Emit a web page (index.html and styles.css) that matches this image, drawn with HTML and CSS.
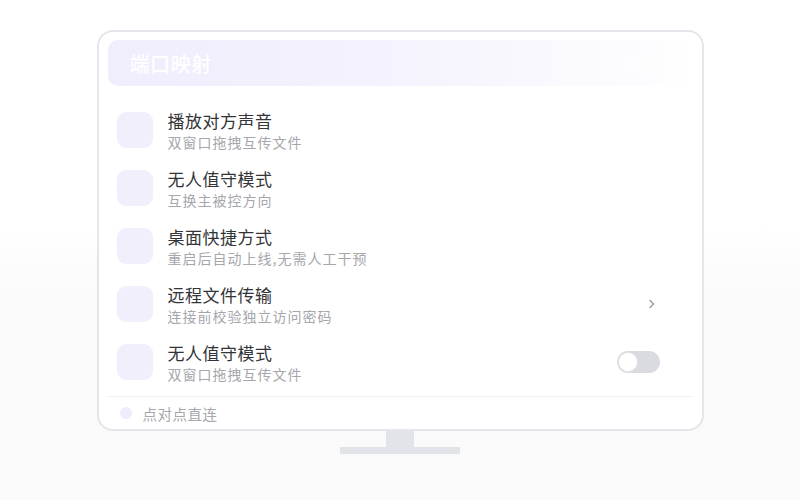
FILE: index.html
```html
<!DOCTYPE html>
<html lang="zh-CN">
<head>
  <meta charset="UTF-8">
  <title>端口映射</title>
  <link rel="stylesheet" href="styles.css">
</head>
<body>
  <div class="stage">
    <div class="monitor">
      <div class="header">
        <span class="header-title">端口映射</span>
        <span class="header-extra">设置</span>
      </div>
      <div class="list">
        <div class="row">
          <div class="icon"></div>
          <div class="text">
            <div class="title">播放对方声音</div>
            <div class="sub">双窗口拖拽互传文件</div>
          </div>
        </div>
        <div class="row">
          <div class="icon"></div>
          <div class="text">
            <div class="title">无人值守模式</div>
            <div class="sub">互换主被控方向</div>
          </div>
        </div>
        <div class="row">
          <div class="icon"></div>
          <div class="text">
            <div class="title">桌面快捷方式</div>
            <div class="sub">重启后自动上线,无需人工干预</div>
          </div>
        </div>
        <div class="row">
          <div class="icon"></div>
          <div class="text">
            <div class="title">远程文件传输</div>
            <div class="sub">连接前校验独立访问密码</div>
          </div>
          <svg class="chevron" width="8" height="12" viewBox="0 0 8 12">
            <path d="M2 2.5 L5.5 6 L2 9.5" fill="none" stroke="#9a9ca3" stroke-width="1.4" stroke-linecap="round" stroke-linejoin="round"/>
          </svg>
        </div>
        <div class="row">
          <div class="icon"></div>
          <div class="text">
            <div class="title">无人值守模式</div>
            <div class="sub">双窗口拖拽互传文件</div>
          </div>
          <div class="toggle"><div class="knob"></div></div>
        </div>
      </div>
      <div class="footer">
        <span class="dot"></span>
        <span class="footer-text">点对点直连</span>
      </div>
    </div>
    <div class="neck"></div>
    <div class="base"></div>
  </div>
</body>
</html>
```

FILE: styles.css
```css
body {
  margin: 0;
  height: 500px;
  font-family: "Noto Sans CJK SC", "Noto Sans", sans-serif;
  background: linear-gradient(180deg, #ffffff 0%, #ffffff 45%, #fafafb 60%, #fafafb 100%);
}
.stage {
  display: flex;
  flex-direction: column;
  align-items: center;
  padding-top: 30px;
}
.monitor {
  box-sizing: border-box;
  width: 607px;
  height: 401px;
  border: 2px solid #e4e6eb;
  border-radius: 16px;
  background: #fff;
  padding: 8px 10px 0 9px;
  display: flex;
  flex-direction: column;
}
.header {
  height: 46px;
  border-radius: 10px;
  background: linear-gradient(90deg, #f0edfd 0%, #f4f2fd 45%, #fcfcff 90%, #ffffff 100%);
  display: flex;
  align-items: center;
  justify-content: space-between;
  padding: 0 40px 0 22px;
}
.header-title {
  color: #fff;
  font-size: 20px;
  letter-spacing: 0.6px;
  font-weight: 500;
}
.header-extra {
  color: #fff;
  font-size: 14px;
}
.list {
  margin-top: 15px;
  display: flex;
  flex-direction: column;
}
.row {
  height: 58px;
  display: flex;
  align-items: center;
  padding: 0 32px 0 9px;
}
.icon {
  width: 36px;
  height: 36px;
  border-radius: 9px;
  background: #f2effd;
  flex-shrink: 0;
}
.text {
  margin-left: 15px;
  flex: 1;
}
.title {
  font-size: 17px;
  line-height: 21px;
  letter-spacing: 0.5px;
  color: #333437;
}
.sub {
  font-size: 14px;
  line-height: 18px;
  letter-spacing: 1px;
  margin-top: 2px;
  color: #a5a7ad;
}
.chevron {
  margin-right: 4px;
}
.toggle {
  width: 43px;
  height: 22px;
  border-radius: 11px;
  background: #d9dbe1;
  position: relative;
}
.knob {
  position: absolute;
  left: 1px;
  top: 1px;
  width: 20px;
  height: 20px;
  border-radius: 50%;
  background: #fff;
  box-sizing: border-box;
  border: 1px solid #e2e4e9;
}
.footer {
  margin-top: 5px;
  border-top: 1px solid #eef0f3;
  height: 32px;
  display: flex;
  align-items: center;
  padding-left: 12px;
}
.dot {
  width: 12px;
  height: 12px;
  border-radius: 50%;
  background: #efecfd;
}
.footer-text {
  margin-left: 11px;
  font-size: 14.5px;
  letter-spacing: 0.5px;
  color: #a5a7ad;
}
.neck {
  width: 28px;
  height: 16px;
  background: #e1e4e9;
}
.base {
  width: 120px;
  height: 7px;
  background: #e1e4e9;
}
```
